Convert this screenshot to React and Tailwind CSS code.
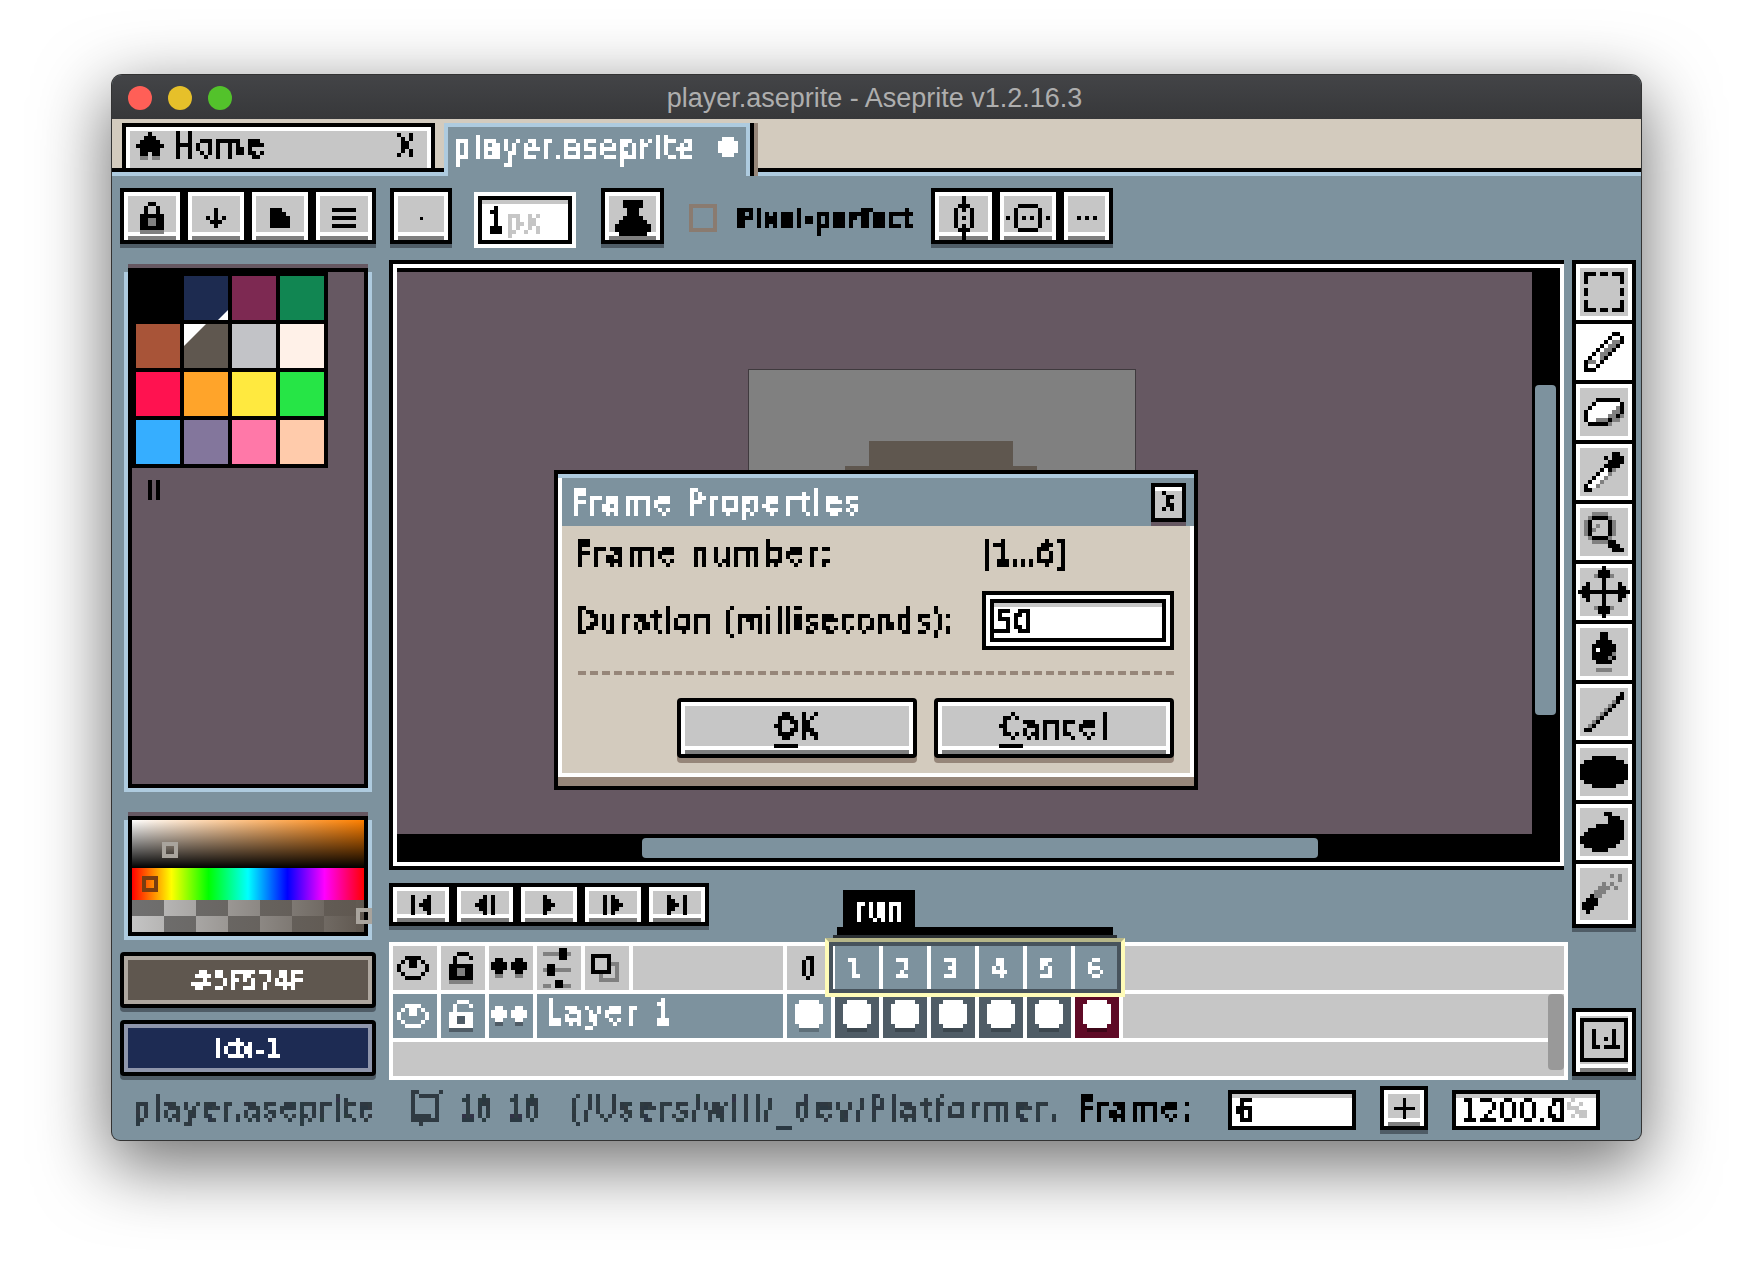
import React from "react"

const COLORS = { "#": "#000", g: "#808080", w: "#fff", s: "#4f5c66", l: "#c6c6c6", b: "#8e8e8e" }

// small helper for the pixel-art icons, one char = one 4px block
const Px = ({ rows, map = {}, s = 4, className = "" }) => {
  const cols = Math.max(...rows.map((r) => r.length))
  const rects = []
  rows.forEach((row, y) => {
    let x = 0
    while (x < row.length) {
      const ch = row[x]
      let n = 1
      while (x + n < row.length && row[x + n] === ch) n++
      if (ch !== ".") rects.push(<rect key={`${x}-${y}`} x={x} y={y} width={n} height={1} fill={map[ch] || COLORS[ch] || ch} />)
      x += n
    }
  })
  return (
    <svg width={cols * s} height={rows.length * s} viewBox={`0 0 ${cols} ${rows.length}`} shapeRendering="crispEdges" className={`block shrink-0 ${className}`}>
      {rects}
    </svg>
  )
}

const T = ({ c = "", children }) => (
  <span className={`inline-block shrink-0 whitespace-nowrap leading-[1.4] font-['DejaVu_Sans_Condensed','DejaVu_Sans',sans-serif] [font-stretch:condensed] [-webkit-text-stroke:1px] [filter:url(#px)] ${c}`}>{children}</span>
)

const bevel = "border-4 border-black bg-[#c6c6c6] shadow-[inset_0_4px_0_#fff,inset_4px_0_0_#fff,inset_-4px_0_0_#fff,inset_0_-4px_0_#7f7f7f,inset_0_-8px_0_#fff,0_4px_0_#4f5c66]"

const Btn = ({ w = "w-16", children }) => (
  <div className={`flex h-14 items-center justify-center pt-1 ${w} ${bevel}`}>{children}</div>
)

const Input = ({ c = "", children }) => (
  <div className={`flex items-center border-4 border-black bg-white pl-1 shadow-[inset_0_4px_0_#c6c6c6] ${c}`}>{children}</div>
)

const icons = {
  lock: ["..##..", ".#..#.", ".#..#.", "######", "##gg##", "##gg##", "######", "gggggg"],
  down: ["..#..", "..#..", "#.#.#", ".###.", "..#.."],
  doc: ["###..", "####.", "#####", "#####", "#####"],
  menu: ["######", "......", "######", "......", "######"],
  ink: ["..#####..", "..#####..", "...###...", "...###...", "..#####..", ".#######.", "#########", "#########", ".#######."],
  symV: ["...#...", "...#...", "..###..", ".#.#.#.", ".#...#.", ".#.#.#.", ".#...#.", ".#.#.#.", "..###..", "...#...", "...#..."],
  symH: ["...#####...", "..#.....#..", "..#.....#..", "#.#.#.#.#.#", "..#.....#..", "..#.....#..", "...#####..."],
  more: ["#.#.#"],
  first: ["#...#", "#..##", "#.###", "#..##", "#...#"],
  prev: ["..#.#", ".##.#", "###.#", ".##.#", "..#.#"],
  play: ["#..", "##.", "###", "##.", "#.."],
  next: ["#.#..", "#.##.", "#.###", "#.##.", "#.#.."],
  last: ["#...#", "##..#", "###.#", "##..#", "#...#"],
  eye: ["..####..", ".#.##.#.", "#..##..#", "#......#", ".#....#.", "..####.."],
  unlock: ["..###.", ".#...#", ".#....", "######", "##gg##", "##gg##", "######", "gggggg"],
  dots: [".##...##.", "####.####", "####.####", ".##...##.", ".gg...gg."],
  sliders: ["....##.", "gggg##g", "....##.", ".......", ".##....", "g##gggg", ".##....", ".......", "...##..", "gg.##gg"],
  copy: ["#####..", "#...#..", "#...#gg", "#...#.g", "#####.g", "..g...g", "..ggggg"],
  select: ["###.##.###", "#........#", "#........#", "..........", "#........#", "#........#", "..........", "#........#", "#........#", "###.##.###"],
  pencil: [".......##.", "......#ww#", ".....#wgg#", "....#wgg#.", "...#wgg#..", "..#wgg#...", ".#wwg#....", "#ggw#.....", "#ww#......", "###......."],
  eraser: ["...######.", "..#wwwwww#", ".#wwwwwwg#", "#wwwwwwgg#", "#wwwwwgg#g", "#wwggg#gg.", ".#####g..."],
  dropper: [".......##.", ".....#.###", "......####", ".....####.", "....#w#g..", "...#wwg...", "..#wwg....", ".#wwg.....", "#wwg......", "##........"],
  zoom: ["..gggg....", ".g####g...", "g#....#g..", "g#.g..#g..", "g#g...#g..", "g#....#g..", ".g####g...", "..gggg##..", "......###.", ".......###"],
  move: ["......#......", ".....###.....", "....g###g....", "......#......", "..#...#...#..", ".##...#...##.", "#############", ".##...#...##.", "..#...#...#..", "......#......", "....g###g....", ".....###.....", "......#......"],
  bucket: ["...##...", "...##...", "..####..", ".######.", ".#w####.", ".#####g.", ".####g#.", "..####..", "........", "..gggg.."],
  line: [".........#", "........##", ".......g#.", "......g#..", ".....g#...", "....g#....", "...g#.....", "..g#......", ".g#.......", "##........"],
  ellipse: ["...######...", ".##########.", "############", "############", "############", "############", ".##########.", "...######..."],
  blob: ["......##....", ".......###..", ".......####.", "....#######.", "..#########.", ".##########.", "###########.", "##########..", ".########...", "...####....."],
  spray: [".......g.g.", ".........g.", ".....g.g...", "....ggg.g..", "...ggg.....", "..#gg......", ".###.......", "####.......", "###........", ".#........."],
  canvas: ["gg.....#", "g.g####.", "g.....#.", "g.....#.", "g.....#.", "g.....#.", "g####.#.", "gg#####.", "..#....."],
  plus: ["...#...", "...#...", "...#...", "#######", "...#...", "...#...", "...#..."],
  cel: [".wwwww.", "wwwwwww", "wwwwwww", "wwwwwww", "wwwwwww", "wwwwwww", ".wwwww.", ".ggggg."],
}

const swatches = [
  "#000000", "#1d2b50", "#7d2952", "#118652",
  "#a85438", "#5f574f", "#c2c3c7", "#fff1e8",
  "#ff1250", "#ffa42a", "#ffe93f", "#26e546",
  "#36aeff", "#83769c", "#ff78a8", "#ffcbab",
]

const tools = ["select", "pencil", "eraser", "dropper", "zoom", "move", "bucket", "line", "ellipse", "blob", "spray"]
const frames = [1, 2, 3, 4, 5, 6]

const Traffic = () => (
  <div className="flex items-center gap-4 pl-4">
    <div className="h-6 w-6 rounded-full bg-[#ff5f57]" />
    <div className="h-6 w-6 rounded-full bg-[#e6c02a]" />
    <div className="h-6 w-6 rounded-full bg-[#53c22b]" />
  </div>
)

const Tabs = () => (
  <div className="flex flex-col bg-[#d3cbbe]">
    <div className="flex h-[49px] items-start gap-[9px] pl-[10px] pt-1">
      <div className="flex h-[45px] w-[313px] items-center border-x-4 border-t-4 border-black bg-[#c6c6c6] pl-1 pr-4 shadow-[inset_0_4px_0_#fff,inset_4px_0_0_#fff,inset_-4px_0_0_#fff]">
        <Px rows={["...#...", "..###..", ".#####.", "#######", ".#####.", ".##.##.", ".gg.gg."]} className="ml-[6px] -mt-1" />
        <T c="ml-2 -mt-1 text-[32px] tracking-[2px] text-black">Home</T>
        <T c="ml-auto -mt-1 text-[30px] text-black">X</T>
      </div>
      <div className="relative z-10 flex h-[53px] w-[306px] items-start border-x-4 border-t-4 border-[#aecbdf] bg-[#7d929e] pl-1 pr-2 shadow-[4px_0_0_#000,8px_0_0_#968679]">
        <T c="text-[32px] leading-[40px] tracking-[2px] text-white">player.aseprite</T>
        <Px rows={[".###.", "#####", "#####", "#####", ".###."]} map={{ "#": "#fff" }} className="ml-auto mt-[10px]" />
      </div>
    </div>
    <div className="h-1 bg-black" />
    <div className="h-1 bg-[#aecbdf]" />
  </div>
)

const Toolbar = () => (
  <div className="mb-3 mt-3 flex h-[60px] items-start">
    <div className="flex">
      <Btn><Px rows={icons.lock} /></Btn>
      <Btn><Px rows={icons.down} /></Btn>
      <Btn><Px rows={icons.doc} /></Btn>
      <Btn><Px rows={icons.menu} /></Btn>
    </div>
    <div className="ml-[14px]"><Btn w="w-[62px]"><div className="h-[3px] w-[3px] bg-black" /></Btn></div>
    <div className="ml-[22px] mt-1 h-14 w-[102px] border-4 border-white">
      <Input c="h-12"><T c="text-[32px] text-black">1</T><T c="text-[32px] tracking-[2px] text-[#c6c6c6]">px</T></Input>
    </div>
    <div className="ml-[25px]"><Btn w="w-[63px]"><Px rows={icons.ink} /></Btn></div>
    <div className="ml-[25px] mt-4 h-7 w-7 border-4 border-[#8a7b70]" />
    <T c="ml-5 mt-[12px] w-[176px] text-[26px] font-bold tracking-[0.5px] text-black">Pixel-perfect</T>
    <div className="ml-[18px] flex">
      <Btn w="w-[65px]"><Px rows={icons.symV} /></Btn>
      <Btn w="w-[64px]"><Px rows={icons.symH} /></Btn>
      <Btn w="w-[53px]"><Px rows={icons.more} /></Btn>
    </div>
  </div>
)

const LeftColumn = () => (
  <div className="flex w-64 shrink-0 flex-col">
    <div className="mx-2 mt-1 h-1 bg-[#665862]" />
    <div className="mx-2 h-1 bg-black" />
    <div className="mx-1 border-x-4 border-b-4 border-[#aecbdf]">
      <div className="h-[516px] border-x-4 border-b-4 border-black bg-[#665862]">
        <div className="grid w-[196px] grid-cols-4 gap-1 bg-black p-1">
          {swatches.map((c, i) => (
            <div key={c} className="relative h-11 w-11" style={{ backgroundColor: c }}>
              {i === 1 && <div className="absolute bottom-0 right-0 h-0 w-0 border-b-[10px] border-l-[10px] border-b-white border-l-transparent" />}
              {i === 5 && <div className="absolute left-0 top-0 h-0 w-0 border-r-[22px] border-t-[22px] border-r-transparent border-t-white" />}
            </div>
          ))}
        </div>
        <div className="ml-4 mt-3 flex gap-1">
          <div className="h-5 w-1 bg-black" />
          <div className="h-5 w-1 bg-black" />
        </div>
      </div>
    </div>

    <div className="mx-2 mt-5 h-1 bg-[#665862]" />
    <div className="mx-2 h-1 bg-black" />
    <div className="mx-1 border-x-4 border-b-4 border-[#aecbdf]">
      <div className="border-x-4 border-b-4 border-black">
        <div className="relative h-12 [background:linear-gradient(180deg,transparent,#000),linear-gradient(90deg,#fff,#ff8000)]">
          <div className="absolute left-[30px] top-[22px] h-4 w-4 border-4 border-[#a9a49d]" />
        </div>
        <div className="relative h-8 bg-[linear-gradient(90deg,#f00,#ff0_17%,#0f0_33%,#0ff_50%,#00f_67%,#f0f_83%,#f00)]">
          <div className="absolute left-[10px] top-2 h-4 w-4 border-4 border-[#7a3d10]" />
        </div>
        <div className="relative h-8 [background:linear-gradient(90deg,transparent,#5f574f),repeating-conic-gradient(#c4c4c4_0_25%,#707070_0_50%)_0_0/64px_32px]">
          <div className="absolute left-[224px] top-2 h-4 w-4 border-4 border-[#a9a49d]" />
        </div>
      </div>
    </div>

    <div className="mt-3 flex h-14 items-center justify-center rounded-[4px] border-4 border-black bg-[#5f574f] shadow-[inset_0_0_0_4px_#aea79f,0_4px_0_#4f5c66]">
      <T c="text-[26px] tracking-[1px] text-white">#5F574F</T>
    </div>
    <div className="mt-3 flex h-14 items-center justify-center rounded-[4px] border-4 border-black bg-[#1d2b53] shadow-[inset_0_0_0_4px_#8e95ab,0_4px_0_#4f5c66]">
      <T c="text-[26px] tracking-[1px] text-white">Idx-1</T>
    </div>
  </div>
)

const Editor = () => (
  <div className="h-[610px] w-[1175px] border-y-4 border-l-4 border-black">
    <div className="flex h-full flex-col border-4 border-white bg-black pt-1">
      <div className="flex min-h-0 flex-1">
        <div className="relative flex-1 bg-[#665862]">
          {/* sprite on the canvas, the dialog hides its lower half */}
          <div className="absolute left-[351px] top-[97px] h-[120px] w-[388px] border border-[#3f3a3e] bg-[#808080]">
            <div className="absolute left-[120px] top-[71px] h-[40px] w-[144px] bg-[#5f574f]" />
            <div className="absolute left-[96px] top-[96px] h-[10px] w-[192px] bg-[#5f574f]" />
          </div>
        </div>
        <div className="w-7 shrink-0 pl-[3px] pt-[113px]">
          <div className="h-[330px] w-[21px] rounded-sm bg-[#7d929e]" />
        </div>
      </div>
      <div className="h-7 shrink-0 pl-[245px] pt-1">
        <div className="h-5 w-[676px] rounded-sm bg-[#7d929e]" />
      </div>
    </div>
  </div>
)

const Transport = () => (
  <div className="mt-[13px] flex h-[47px] items-start">
    {["first", "prev", "play", "next", "last"].map((k) => (
      <div key={k} className={`flex h-[43px] w-16 items-center justify-center ${bevel}`}>
        <Px rows={icons[k]} />
      </div>
    ))}
  </div>
)

const Timeline = () => (
  <div className="relative mt-3 h-[138px] w-[1179px] border-4 border-white bg-[#c6c6c6]">
    <div className="flex h-11 gap-1 bg-white">
      <div className="flex w-11 items-center justify-center bg-[#c6c6c6] pr-1"><Px rows={icons.eye} /></div>
      <div className="flex w-11 items-center justify-center bg-[#c6c6c6] pr-1"><Px rows={icons.unlock} /></div>
      <div className="flex w-11 items-center justify-center bg-[#c6c6c6] pr-1"><Px rows={icons.dots} /></div>
      <div className="flex w-11 items-center justify-center bg-[#c6c6c6] pr-1"><Px rows={icons.sliders} /></div>
      <div className="flex w-11 items-center justify-center bg-[#c6c6c6] pr-1"><Px rows={icons.copy} /></div>
      <div className="w-[150px] bg-[#c6c6c6]" />
      <div className="flex w-11 items-center justify-center bg-[#c6c6c6] pr-1"><T c="pl-[2px] text-[28px] text-black">0</T></div>
      {frames.map((f) => (
        <div key={f} className="flex w-11 items-center justify-center bg-[#7d929e] pr-1"><T c="text-[26px] text-white">{f}</T></div>
      ))}
      <div className="flex-1 bg-[#c6c6c6]" />
    </div>
    <div className="flex h-[52px] gap-1 border-y-4 border-white bg-white">
      <div className="flex w-11 items-center justify-center bg-[#7d929e] pr-1"><Px rows={icons.eye} map={{ "#": "#fff" }} /></div>
      <div className="flex w-11 items-center justify-center bg-[#7d929e] pr-1"><Px rows={icons.unlock} map={{ "#": "#fff", g: "#4f5c66" }} /></div>
      <div className="flex w-11 items-center justify-center bg-[#7d929e] pr-1"><Px rows={icons.dots} map={{ "#": "#fff", g: "#4f5c66" }} /></div>
      <div className="flex w-[246px] items-center bg-[#7d929e] pb-2 pl-2">
        <T c="text-[32px] tracking-[3px] text-white">Layer 1</T>
      </div>
      <div className="flex w-11 items-center justify-center bg-[#7d929e]"><Px rows={icons.cel} map={{ g: "#5e6f79" }} /></div>
      {frames.map((f) => (
        <div key={f} className={`flex w-11 items-center justify-center ${f === 6 ? "bg-[#5f0a26]" : "bg-[#4f5c66]"}`}>
          <Px rows={icons.cel} map={{ g: f === 6 ? "#3d0618" : "#3c474f" }} />
        </div>
      ))}
      <div className="flex-1 bg-[#c6c6c6]" />
    </div>
    <div className="flex h-[34px] justify-end">
      <div className="-mt-12 h-[76px] w-4 rounded-sm bg-[#999]" />
    </div>

    {/* selected range and tag, they sit on top of the frame header */}
    <div className="pointer-events-none absolute left-[432px] top-[-8px] h-[59px] w-[300px] border-4 border-[#fffcb8] border-t-[#b6b689] shadow-[inset_0_0_0_4px_#47535c]" />
    <div className="absolute left-[440px] top-[-11px] h-[3px] w-[284px] bg-[#2a2f33]" />
    <div className="absolute left-[444px] top-[-19px] h-2 w-[276px] bg-black" />
    <div className="absolute left-[450px] top-[-56px] flex h-[37px] w-[72px] items-center justify-center bg-black">
      <T c="text-[32px] leading-[37px] tracking-[1px] text-white">run</T>
    </div>
  </div>
)

const RightColumn = () => (
  <div className="flex w-16 shrink-0 flex-col">
    <div className="flex flex-col border-4 border-black shadow-[0_4px_0_#4f5c66]">
      {tools.map((k, i) => (
        <div
          key={k}
          className={`flex h-[60px] items-center justify-center border-black shadow-[inset_0_4px_0_#fff,inset_4px_0_0_#fff,inset_-4px_0_0_#fff,inset_0_-4px_0_#fff] ${i === 1 ? "bg-white" : "bg-[#c6c6c6]"} ${i < 10 ? "border-b-4" : ""}`}
        >
          <Px rows={icons[k]} />
        </div>
      ))}
    </div>
    <div className={`mt-20 flex h-[68px] items-center justify-center pb-1 ${bevel}`}>
      <div className="flex h-[44px] w-[48px] items-center justify-center border-4 border-black">
        <T c="text-[22px] text-black">1:1</T>
      </div>
    </div>
  </div>
)

const StatusBar = () => (
  <div className="mt-1 flex h-12 items-center pl-3">
    <T c="w-[244px] text-[32px] tracking-[2px] text-[#2f3a42]">player.aseprite</T>
    <Px rows={icons.canvas} map={{ "#": "#2f3a42", g: "#2f3a42" }} className="ml-[35px]" />
    <T c="ml-[15px] w-[48px] text-[32px] tracking-[-2px] text-[#2f3a42]">16</T>
    <T c="w-[62px] text-[32px] tracking-[-2px] text-[#2f3a42]">16</T>
    <T c="w-[496px] text-[32px] tracking-[3px] text-[#2f3a42]">(/Users/will/_dev/Platformer,</T>
    <T c="ml-[13px] w-[116px] text-[32px] tracking-[3px] text-black">Frame:</T>
    <div className="ml-[35px] mt-1 h-10 w-32">
      <Input c="h-10"><T c="text-[32px] leading-[32px] text-black">6</T></Input>
    </div>
    <div className={`ml-6 flex h-11 w-12 items-center justify-center ${bevel}`}><Px rows={icons.plus} s={3} /></div>
    <div className="ml-6 mt-1 h-10 w-[148px]">
      <Input c="h-10"><T c="text-[32px] leading-[32px] tracking-[1px] text-black">1200.0</T><T c="text-[24px] leading-[32px] text-[#c6c6c6]">%</T></Input>
    </div>
  </div>
)

const dlgBtn = "flex h-[60px] w-60 items-center justify-center rounded-sm border-4 border-black bg-[#c6c6c6] pb-1 shadow-[inset_0_4px_0_#fff,inset_4px_0_0_#fff,inset_-4px_0_0_#fff,inset_0_-4px_0_#7f7f7f,inset_0_-8px_0_#fff,0_5px_0_#968679]"

const Dialog = () => (
  <div className="absolute left-[442px] top-[395px] z-20 h-[320px] w-[644px] border-4 border-black bg-[#968679]">
    <div className="h-1 bg-[#aecbdf]" />
    <div className="flex h-12 items-center border-l-4 border-white bg-[#7d929e] pl-2">
      <T c="text-[32px] tracking-[3px] text-white">Frame Properties</T>
      <div className="ml-auto mr-2 flex h-[39px] w-[35px] items-center justify-center border-4 border-black bg-[#c6c6c6] shadow-[inset_0_4px_0_#fff,0_4px_0_#665862]">
        <T c="text-[22px] text-black">X</T>
      </div>
    </div>
    <div className="h-[251px] border-x-4 border-b-4 border-white bg-[#d3cbbe] pl-3 pr-4 pt-[9px]">
      <div className="flex h-10 items-center pb-1">
        <T c="w-[407px] text-[32px] tracking-[3px] text-black">Frame number:</T>
        <T c="text-[32px] tracking-[-0.5px] text-black">[1...6]</T>
      </div>
      <div className="mt-4 flex h-[59px] items-center">
        <T c="w-[408px] pl-[1px] text-[32px] tracking-[1.5px] text-black">Duration (milliseconds):</T>
        <div className="h-[59px] w-[192px] border-4 border-black bg-white p-1">
          <div className="flex h-full items-center border-4 border-black bg-white shadow-[inset_0_4px_0_#c6c6c6]">
            <T c="text-[32px] leading-[32px] tracking-[1px] text-black">50</T>
          </div>
        </div>
      </div>
      <div className="ml-1 mt-[21px] h-1 bg-[repeating-linear-gradient(90deg,#968679_0_8px,transparent_8px_12px)]" />
      <div className="mt-[23px] flex justify-end gap-[17px]">
        <div className={dlgBtn}>
          <T c="text-[32px] tracking-[2px] text-black"><span className="underline decoration-4 underline-offset-[7px]">O</span>K</T>
        </div>
        <div className={dlgBtn}>
          <T c="text-[32px] tracking-[2px] text-black"><span className="underline decoration-4 underline-offset-[7px]">C</span>ancel</T>
        </div>
      </div>
    </div>
  </div>
)

export default function App() {
  return (
    <div className="h-[1288px] w-[1752px] overflow-hidden bg-white pl-[112px] pt-[75px]">
      {/* samples the text on a 4px grid so it reads as the pixel font */}
      <svg width="0" height="0" className="block h-0 w-0">
        <filter id="px" x="0" y="0" width="100%" height="100%">
          <feFlood x="1" y="1" width="1" height="1" />
          <feComposite width="4" height="4" />
          <feTile result="grid" />
          <feComposite in="SourceGraphic" in2="grid" operator="in" />
          <feComponentTransfer>
            <feFuncA type="discrete" tableValues="0 1 1 1" />
          </feComponentTransfer>
          <feMorphology operator="dilate" radius="1" result="d" />
          <feOffset in="d" dx="1" dy="0" result="e" />
          <feMerge result="f">
            <feMergeNode in="d" />
            <feMergeNode in="e" />
          </feMerge>
          <feOffset in="f" dx="0" dy="1" result="h" />
          <feMerge>
            <feMergeNode in="f" />
            <feMergeNode in="h" />
          </feMerge>
        </filter>
      </svg>

      <div className="relative h-[1065px] w-[1529px] rounded-t-[10px] rounded-b-[8px] bg-[#7d929e] shadow-[0_0_0_1px_#333,0_22px_70px_4px_rgba(0,0,0,0.56)]">
        <div className="grid h-11 grid-cols-[1fr_auto_1fr] items-center rounded-t-[10px] bg-[linear-gradient(#434447,#37383a)]">
          <Traffic />
          <span className="pr-1 font-['Liberation_Sans',sans-serif] text-[27px] leading-[46px] text-[#aeaeae]">player.aseprite - Aseprite v1.2.16.3</span>
          <div />
        </div>
        <Tabs />
        <div className="pl-2">
          <Toolbar />
          <div className="flex items-start">
            <LeftColumn />
            <div className="ml-[13px] w-[1183px] shrink-0">
              <Editor />
              <Transport />
              <Timeline />
            </div>
            <RightColumn />
          </div>
          <StatusBar />
        </div>
        <Dialog />
      </div>
    </div>
  )
}
